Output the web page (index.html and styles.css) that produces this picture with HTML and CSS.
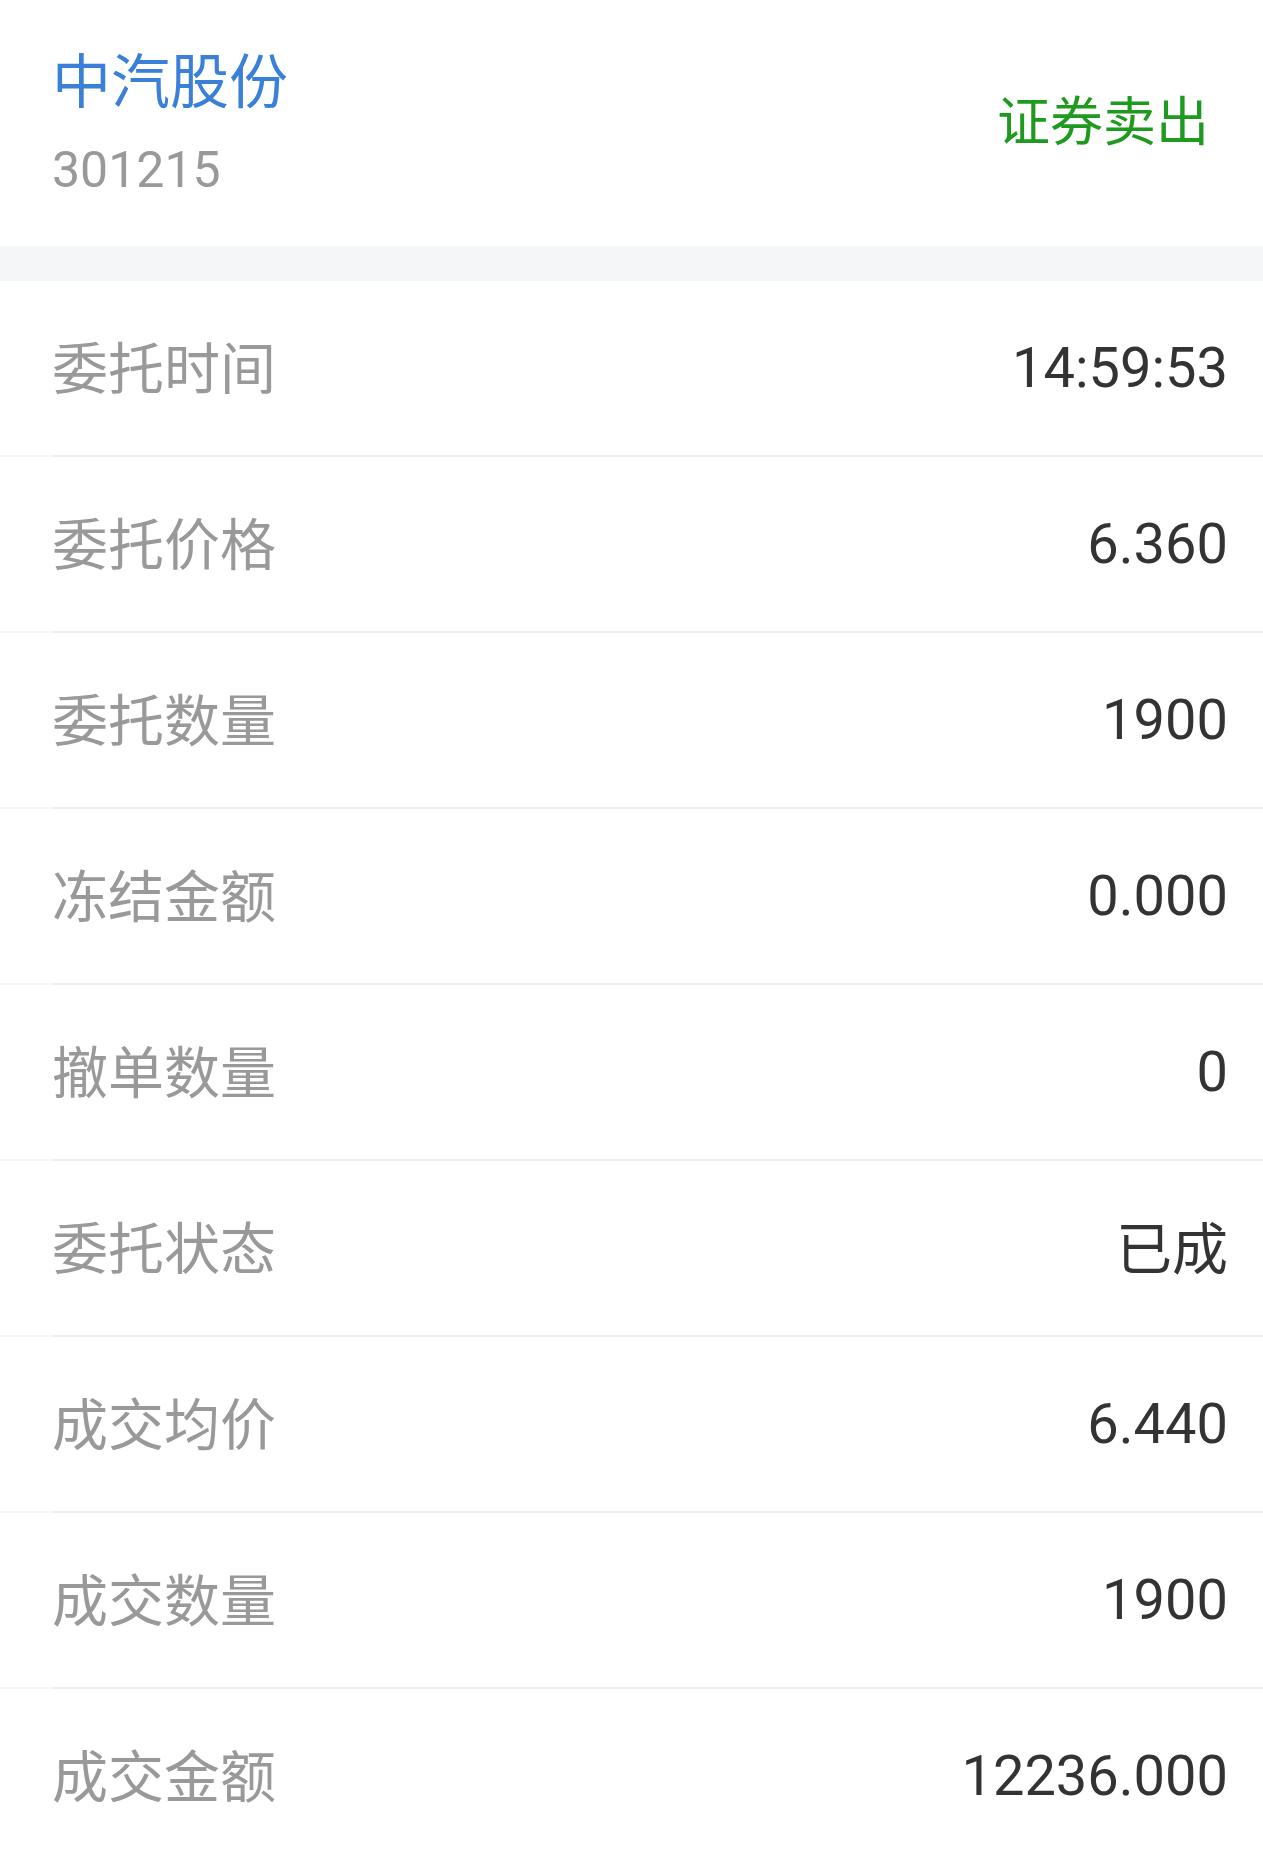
FILE: index.html
```html
<!DOCTYPE html>
<html lang="zh-CN">
<head>
<meta charset="utf-8">
<title>委托详情</title>
<link rel="stylesheet" href="styles.css">
</head>
<body>
<div class="page">
  <header class="header">
    <div class="stock">
      <div class="stock-name">中汽股份</div>
      <div class="stock-code">301215</div>
    </div>
    <div class="trade-type">证券卖出</div>
  </header>
  <div class="gap"></div>
  <ul class="list">
    <li class="row"><div class="row-inner"><span class="label">委托时间</span><span class="value">14:59:53</span></div></li>
    <li class="row"><div class="row-inner"><span class="label">委托价格</span><span class="value">6.360</span></div></li>
    <li class="row"><div class="row-inner"><span class="label">委托数量</span><span class="value">1900</span></div></li>
    <li class="row"><div class="row-inner"><span class="label">冻结金额</span><span class="value">0.000</span></div></li>
    <li class="row"><div class="row-inner"><span class="label">撤单数量</span><span class="value">0</span></div></li>
    <li class="row"><div class="row-inner"><span class="label">委托状态</span><span class="value cjk">已成</span></div></li>
    <li class="row"><div class="row-inner"><span class="label">成交均价</span><span class="value">6.440</span></div></li>
    <li class="row"><div class="row-inner"><span class="label">成交数量</span><span class="value">1900</span></div></li>
    <li class="row"><div class="row-inner"><span class="label">成交金额</span><span class="value">12236.000</span></div></li>
  </ul>
</div>
</body>
</html>
```
FILE: styles.css
```css
* { box-sizing: border-box; }
html, body {
  margin: 0;
  padding: 0;
  background: #ffffff;
}
body {
  font-family: Roboto, "Noto Sans CJK SC", sans-serif;
}
.page {
  width: 1263px;
  background: #ffffff;
}
.header {
  height: 246px;
  display: flex;
  align-items: center;
  justify-content: space-between;
  padding: 0 54px 0 52px;
}
.stock {
  display: flex;
  flex-direction: column;
  gap: 38px;
  padding-bottom: 4px;
}
.stock-name {
  font-family: "Noto Sans CJK SC", sans-serif;
  font-size: 59px;
  line-height: 59px;
  color: #3a7fd8;
}
.stock-code {
  font-family: Roboto, sans-serif;
  font-size: 50px;
  line-height: 50px;
  color: #999999;
}
.trade-type {
  font-family: "Noto Sans CJK SC", sans-serif;
  font-size: 53px;
  line-height: 53px;
  color: #1e9a1e;
  padding-bottom: 10px;
}
.gap {
  height: 35px;
  background: #f5f6f8;
}
.list {
  list-style: none;
  margin: 0;
  padding: 0;
}
.row {
  background: linear-gradient(#f7f7f7, #f7f7f7) left bottom / 100% 2px no-repeat;
}
.row-inner {
  height: 176px;
  margin-left: 52px;
  padding-right: 35px;
  display: flex;
  align-items: center;
  justify-content: space-between;
  border-bottom: 2px solid #eeeeee;
}
.label {
  font-family: "Noto Sans CJK SC", sans-serif;
  font-size: 56px;
  line-height: 56px;
  color: #999999;
  padding-bottom: 6px;
}
.value {
  font-family: Roboto, "Noto Sans CJK SC", sans-serif;
  font-size: 56px;
  line-height: 56px;
  color: #333333;
}
.value.cjk {
  font-family: "Noto Sans CJK SC", sans-serif;
  padding-bottom: 6px;
}
```
